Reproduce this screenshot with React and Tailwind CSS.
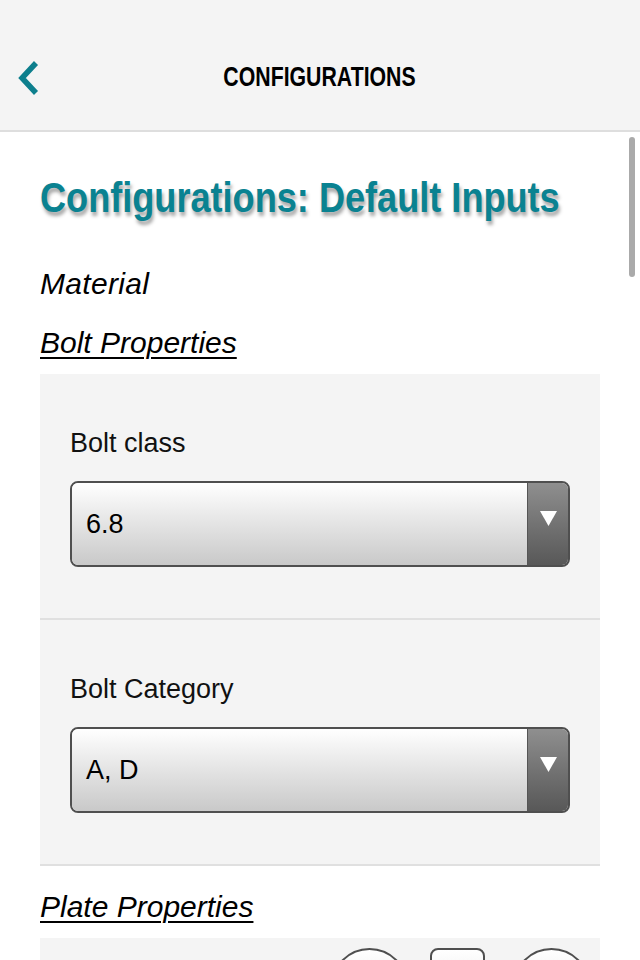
import React from 'react';

const SelectBox = ({ value }) => {
  return (
    <div className="flex h-[86px] rounded-[8px] border-2 border-[#4f4f4f] overflow-hidden">
      <div className="flex-1 flex items-center pl-[14px] bg-gradient-to-b from-white to-[#c9c9c9] text-[27px] text-black">
        {value}
      </div>
      <div className="w-[41px] flex justify-center pt-[28px] bg-gradient-to-b from-[#8f8f8f] to-[#585858] border-l border-[#555]">
        <svg width="17" height="15" viewBox="0 0 17 15">
          <path d="M0 0 L17 0 L8.5 15 Z" fill="#fff" />
        </svg>
      </div>
    </div>
  );
};

const FieldRow = ({ label, value }) => {
  return (
    <div className="px-[30px] pt-[53px] pb-[51px] border-b-2 border-[#e0e0e0]">
      <div className="text-[27px] leading-[32px] text-[#111] mb-[22px]">{label}</div>
      <SelectBox value={value} />
    </div>
  );
};

export default function App() {
  return (
    <div
      className="relative w-[640px] h-[960px] overflow-hidden bg-white"
      style={{ fontFamily: '"Liberation Sans", Arial, sans-serif' }}
    >
      <header className="h-[132px] bg-[#f4f4f4] border-b-2 border-[#dedede] flex items-center justify-center relative">
        <div className="absolute left-[15px] top-[60px]">
          <svg width="26" height="36" viewBox="0 0 26 36">
            <path d="M21 3 L7 18 L21 33" fill="none" stroke="#0d7f8d" strokeWidth="5.5" />
          </svg>
        </div>
        <h1 className="inline-block mt-[24px] text-[28px] leading-[32px] font-bold text-black scale-x-[0.76] origin-center whitespace-nowrap">
          CONFIGURATIONS
        </h1>
      </header>

      <main className="px-[40px]">
        <h2 className="mt-[42px] text-[42px] leading-[48px] font-bold text-[#0a8291] whitespace-nowrap">
          <span className="inline-block scale-x-[0.86] origin-left [text-shadow:2px_4px_4px_rgba(0,0,0,0.35)]">
            Configurations: Default Inputs
          </span>
        </h2>

        <div className="mt-[44px] text-[30px] italic text-black leading-[36px] tracking-[0.3px]">Material</div>
        <div className="mt-[23px] text-[30px] italic underline underline-offset-[4px] decoration-[2px] text-black leading-[36px]">
          Bolt Properties
        </div>

        <section className="mt-[13px] bg-[#f4f4f4]">
          <FieldRow label="Bolt class" value="6.8" />
          <FieldRow label="Bolt Category" value="A, D" />
        </section>

        <div className="mt-[23px] text-[30px] italic underline underline-offset-[4px] decoration-[2px] text-black leading-[36px]">
          Plate Properties
        </div>

        <section className="mt-[13px] bg-[#f4f4f4] h-[100px] pt-[10px] flex">
          <div className="ml-[291px] w-[77px] h-[80px] rounded-[40px] border-2 border-[#4f4f4f] bg-gradient-to-b from-white to-[#ddd]" />
          <div className="ml-[22px] w-[55px] h-[80px] rounded-[8px] border-2 border-[#4f4f4f] bg-gradient-to-b from-white to-[#ddd]" />
          <div className="ml-[28px] w-[77px] h-[80px] rounded-[40px] border-2 border-[#4f4f4f] bg-gradient-to-b from-white to-[#ddd]" />
        </section>
      </main>

      <div className="absolute right-[5px] top-[137px] w-[6px] h-[140px] rounded-full bg-[#aaaaaa]" />
    </div>
  );
}
